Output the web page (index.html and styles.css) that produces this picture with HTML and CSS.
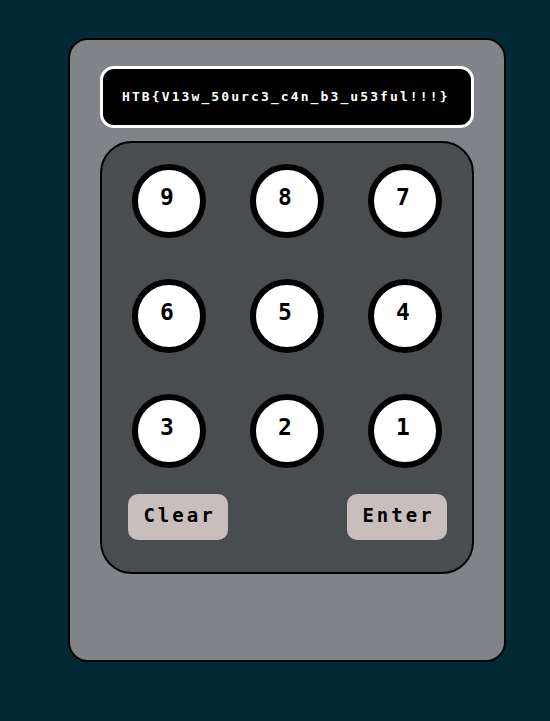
FILE: index.html
```html
<!DOCTYPE html>
<html>
<head>
<meta charset="utf-8">
<link rel="stylesheet" href="styles.css">
</head>
<body>
<div class="page">
  <div class="card">
    <div class="display">HTB{V13w_50urc3_c4n_b3_u53ful!!!}</div>
    <div class="keypad">
      <div class="keys">
        <button class="key">9</button>
        <button class="key">8</button>
        <button class="key">7</button>
        <button class="key">6</button>
        <button class="key">5</button>
        <button class="key">4</button>
        <button class="key">3</button>
        <button class="key">2</button>
        <button class="key">1</button>
      </div>
      <div class="actions">
        <button class="action">Clear</button>
        <button class="action">Enter</button>
      </div>
    </div>
  </div>
</div>
</body>
</html>
```

FILE: styles.css
```css
html, body {
  margin: 0;
  padding: 0;
  background: #022a35;
  height: 100%;
}
.page {
  padding: 38px 0 0 68px;
}
.card {
  box-sizing: border-box;
  width: 438px;
  height: 624px;
  background: #808488;
  border: 2px solid #000;
  border-radius: 20px;
  padding: 26px 30px 0 30px;
}
.display {
  box-sizing: border-box;
  height: 62px;
  background: #000;
  border: 3px solid #fff;
  border-radius: 14px;
  color: #fff;
  font-family: "DejaVu Sans Mono", monospace;
  font-weight: bold;
  font-size: 13px;
  letter-spacing: 2.1px;
  padding-left: 19px;
  padding-bottom: 2px;
  display: flex;
  align-items: center;
}
.keypad {
  box-sizing: border-box;
  margin-top: 13px;
  height: 433px;
  background: #4a4d50;
  border: 2px solid #000;
  border-radius: 32px;
  padding-top: 21px;
}
.keys {
  display: grid;
  grid-template-columns: repeat(3, 74px);
  grid-auto-rows: 74px;
  column-gap: 44px;
  row-gap: 41px;
  padding: 0 30px;
}
.key {
  box-sizing: border-box;
  width: 74px;
  height: 74px;
  border: 6px solid #000;
  border-radius: 50%;
  background: #fff;
  color: #000;
  font-family: "DejaVu Sans Mono", monospace;
  font-weight: bold;
  font-size: 23px;
  padding: 0 4px 8px 0;
  margin: 0;
  display: flex;
  align-items: center;
  justify-content: center;
}
.actions {
  display: flex;
  justify-content: space-between;
  padding: 0 25px 0 26px;
  margin-top: 26px;
}
.action {
  box-sizing: border-box;
  width: 100px;
  height: 46px;
  border: none;
  border-radius: 10px;
  background: #c8bebd;
  color: #000;
  font-family: "DejaVu Sans Mono", monospace;
  font-weight: bold;
  font-size: 19px;
  letter-spacing: 3px;
  padding: 0 0 4px 3px;
  margin: 0;
  display: flex;
  align-items: center;
  justify-content: center;
}
```
